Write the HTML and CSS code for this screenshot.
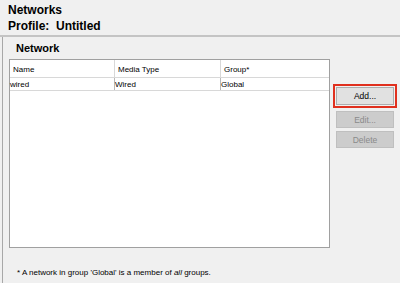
FILE: index.html
```html
<!DOCTYPE html>
<html lang="en">
<head>
    <meta charset="UTF-8">
    <title>Networks</title>
    <link rel="stylesheet" href="styles.css">
</head>
<body>
    <div class="header">
        <div class="title">Networks</div>
        <div class="title">Profile:&nbsp; Untitled</div>
    </div>

    <div class="panel">
        <div class="section-title">Network</div>
        <div class="content">
            <div class="table">
                <div class="row head">
                    <div class="cell c1">Name</div>
                    <div class="cell c2">Media Type</div>
                    <div class="cell c3">Group*</div>
                </div>
                <div class="row data">
                    <div class="cell c1">wired</div>
                    <div class="cell c2">Wired</div>
                    <div class="cell c3">Global</div>
                </div>
            </div>
            <div class="buttons">
                <div class="focus"><button class="btn">Add...</button></div>
                <button class="btn" disabled>Edit...</button>
                <button class="btn" disabled>Delete</button>
            </div>
        </div>
        <div class="note">* A network in group 'Global' is a member of <i>all</i> groups.</div>
    </div>
</body>
</html>
```

FILE: styles.css
```css
* {
    box-sizing: border-box;
}

body {
    margin: 0;
    background: #f0f0f0;
    font-family: 'Liberation Sans', Arial, sans-serif;
    color: #000;
    width: 400px;
    height: 283px;
    overflow: hidden;
}

.header {
    padding: 2px 8px 0;
    height: 37px;
    border-bottom: 2px solid #c4c4c4;
}

.title {
    font-weight: bold;
    font-size: 12px;
    line-height: 16px;
}

.panel {
    margin-left: 2px;
    border-left: 1px solid #a8a8a8;
    height: 246px;
    padding-top: 4px;
}

.section-title {
    font-weight: bold;
    font-size: 11px;
    line-height: 14px;
    padding-left: 13px;
    margin-bottom: 4px;
}

.content {
    display: flex;
    align-items: flex-start;
}

.table {
    margin-left: 6px;
    width: 321px;
    height: 189px;
    background: #fff;
    border: 1px solid #a0a0a0;
    font-size: 8px;
}

.row {
    display: flex;
}

.head {
    height: 18px;
    border-bottom: 1px solid #d8d8d8;
}

.head .cell {
    padding-left: 3px;
    line-height: 19px;
}

.data {
    height: 13px;
    border-bottom: 1px solid #d8d8d8;
}

.data .cell {
    line-height: 13px;
}

.c1 {
    width: 105px;
    border-right: 1px solid #d8d8d8;
}

.c2 {
    width: 106px;
    border-right: 1px solid #d8d8d8;
}

.c3 {
    flex: 1;
}

.data .c1, .data .c2 {
    border-right: 1px solid #b8b8b8;
}

.buttons {
    display: flex;
    flex-direction: column;
    gap: 3px;
    margin-left: 3px;
    margin-top: 25px;
}

.focus {
    border: 2px solid #e0301e;
    padding: 1px;
}

.btn {
    display: block;
    width: 58px;
    height: 18px;
    margin: 0;
    padding: 0;
    background: #e1e1e1;
    border: 1px solid #adadad;
    font-family: 'Liberation Sans', Arial, sans-serif;
    font-size: 8.5px;
    color: #000;
}

.buttons > .btn {
    margin-left: 3px;
    height: 17px;
    background: #cccccc;
    border-color: #bfbfbf;
    color: #8a8a8a;
}

.note {
    margin-top: 20px;
    padding-left: 14px;
    font-size: 8px;
}
```
